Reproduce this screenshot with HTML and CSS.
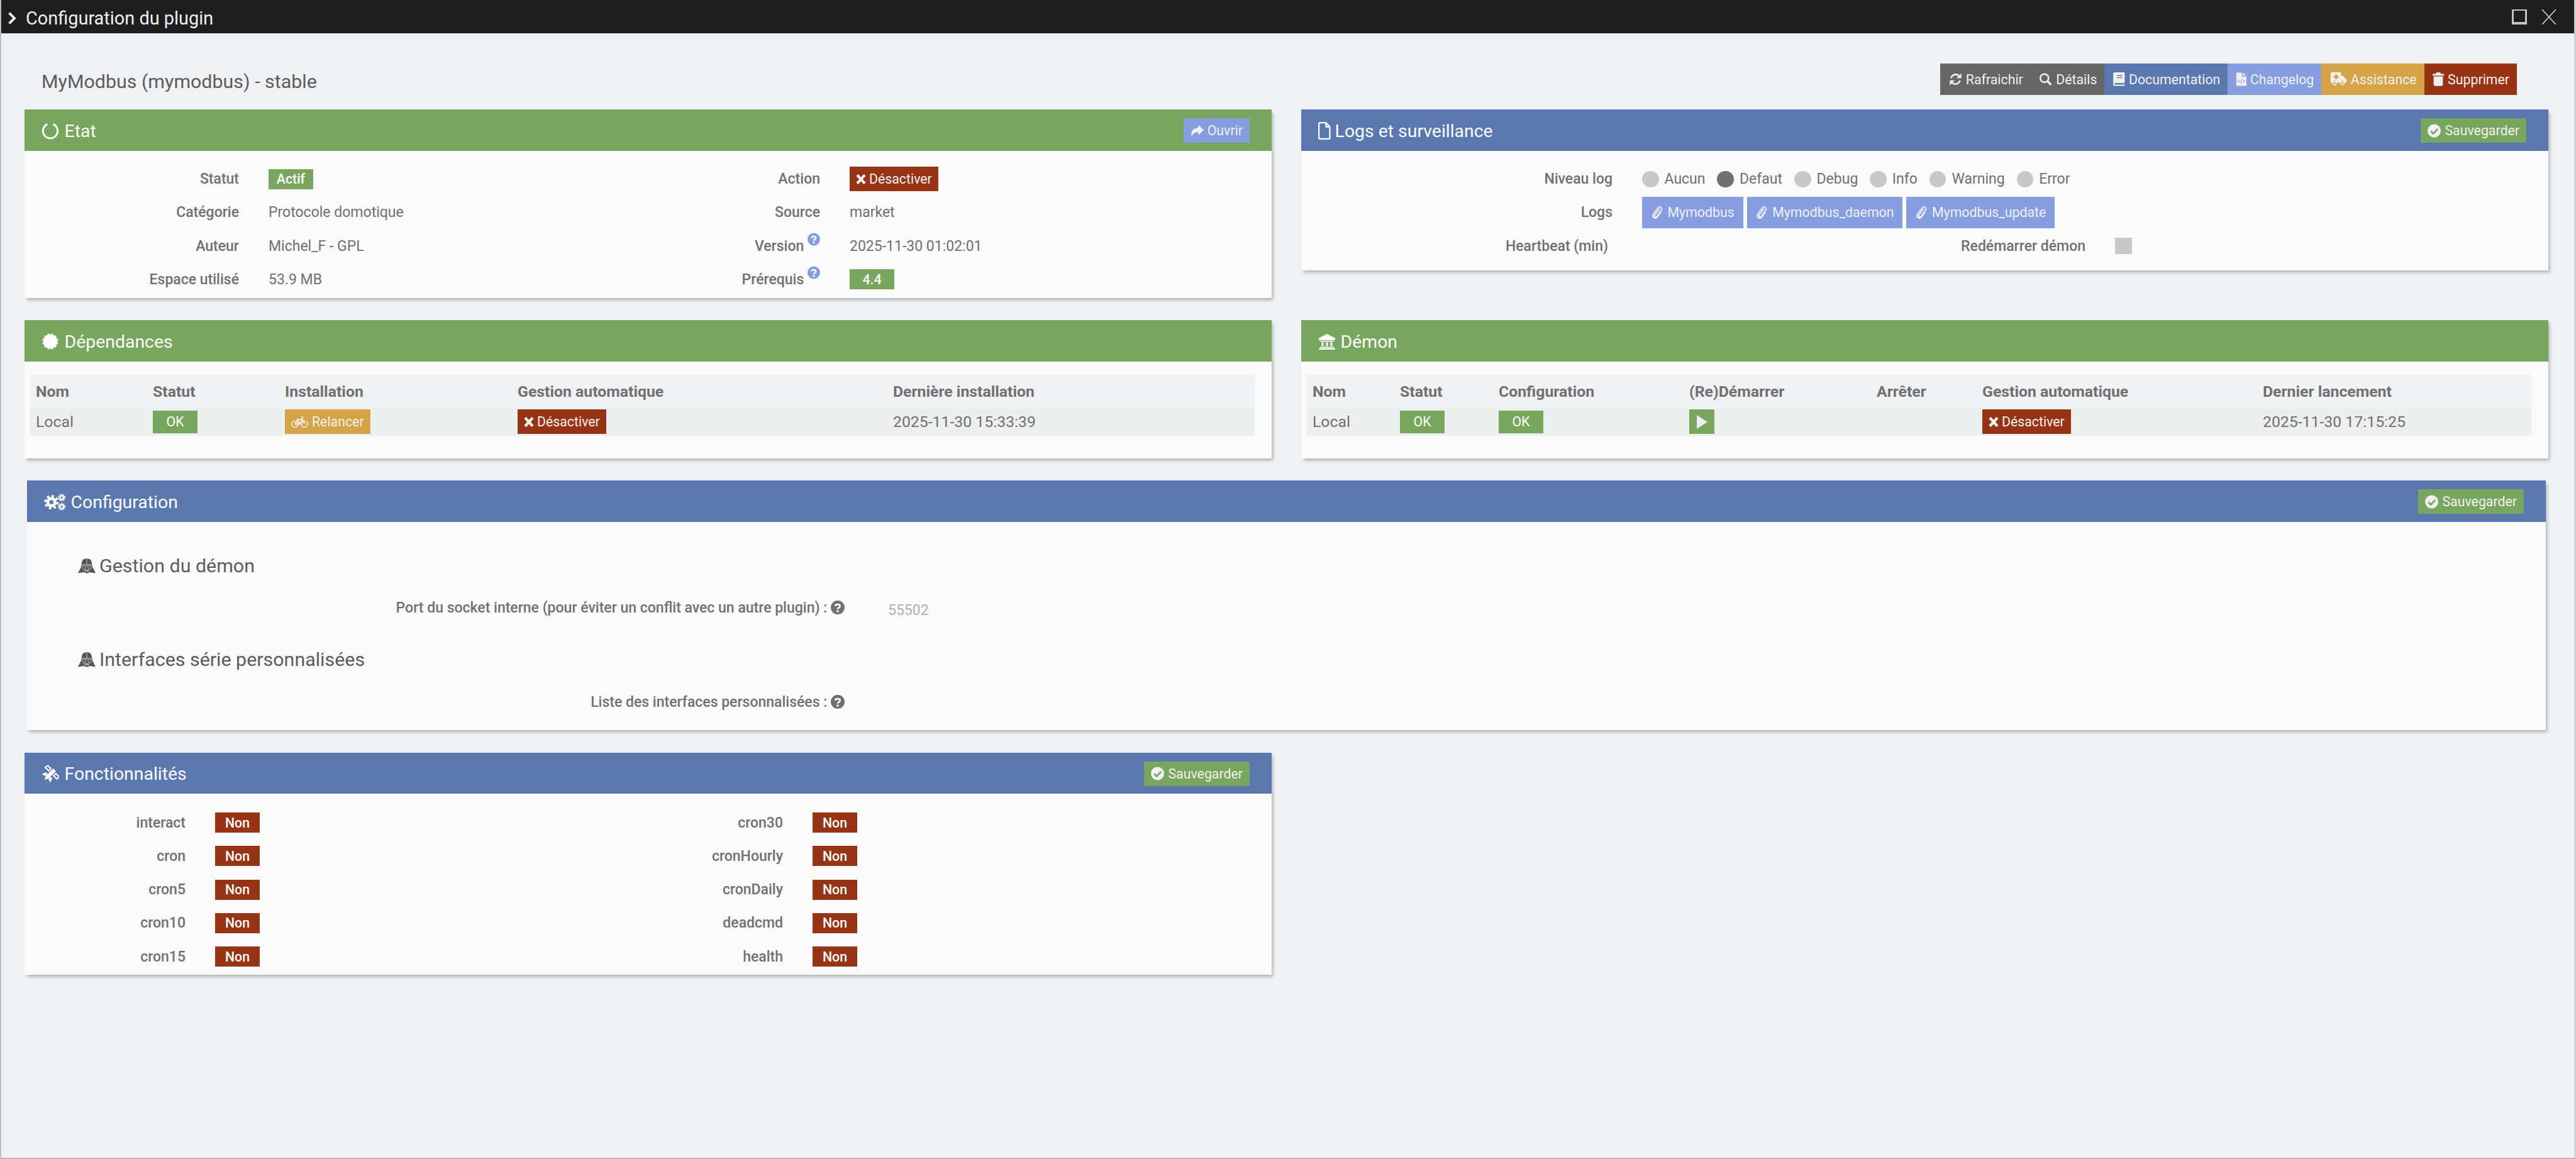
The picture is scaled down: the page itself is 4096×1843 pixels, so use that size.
FILE: index.html
```html
<!DOCTYPE html>
<html lang="fr">

<head>
    <meta name="viewport" content="width=device-width, initial-scale=1.0">
    <title>Configuration du plugin</title>
    <link rel="stylesheet" href="styles.css">
</head>

<body>
    <!-- icons, used below with <use> -->
    <svg class="sprite" xmlns="http://www.w3.org/2000/svg">
        <symbol id="i-notch" viewBox="0 0 24 24"><path d="M8 3A10 10 0 1 0 16 3" fill="none" stroke="currentColor" stroke-width="2.600"/></symbol>
        <symbol id="i-file" viewBox="0 0 20 28"><path d="M2 1.200h10.500l6 6.500V26a.8.8 0 0 1-.8.8H2a.8.8 0 0 1-.8-.8V2a.8.8 0 0 1 .8-.8zM12.500 1.500v6.200h6" fill="none" stroke="currentColor" stroke-width="2.200"/></symbol>
        <symbol id="i-cert" viewBox="0 0 24 24"><g fill="currentColor"><rect x="3.900" y="3.900" width="16.200" height="16.200"/><rect x="3.900" y="3.900" width="16.200" height="16.200" transform="rotate(30 12 12)"/><rect x="3.900" y="3.900" width="16.200" height="16.200" transform="rotate(60 12 12)"/></g></symbol>
        <symbol id="i-bank" viewBox="0 0 28 25"><path fill="currentColor" d="M14 0 27 6.500V10H1V6.500zM3 11h22v1.500H3zM5.500 13.500h3v6h-3zM12.500 13.500h3v6h-3zM19.500 13.500h3v6h-3zM3 20.500h22V22H3zM1 22.500h26V25H1z"/></symbol>
        <symbol id="i-cogs" viewBox="0 0 36 28"><g fill="none" stroke="currentColor"><circle cx="12" cy="14" r="6" stroke-width="5"/><circle cx="12" cy="14" r="10" stroke-width="4" stroke-dasharray="4 3.850"/><circle cx="29" cy="6.500" r="3" stroke-width="2.400"/><circle cx="29" cy="6.500" r="5.200" stroke-width="2" stroke-dasharray="2 1.270"/><circle cx="29" cy="21.500" r="3" stroke-width="2.400"/><circle cx="29" cy="21.500" r="5.200" stroke-width="2" stroke-dasharray="2 1.270"/></g></symbol>
        <symbol id="i-sat" viewBox="0 0 32 32"><g fill="currentColor" transform="rotate(45 16 16)"><path d="M12.500 5h7v19l-3.500 7-3.500-7z"/><path fill-rule="evenodd" d="M0 7h11v8H0zM2.500 9.500v3h6v-3zM21 7h11v8H21zM23.500 9.500v3h6v-3z"/><path d="M8 19h4v6l-7 2zM20 19h4l3 8-7-2z"/></g></symbol>
        <symbol id="i-vader" viewBox="0 0 32 27"><path fill="currentColor" d="M16 0C10 0 7.500 3 6.800 8L5.800 15 0 26.500 10 25l6 2 6-2 10 1.500L26.200 15l-1-7C24.500 3 22 0 16 0z"/><path fill="none" stroke="#e4e4e4" stroke-width=".9" d="M16 0v13M7 11h7.500l1.500 2 1.500-2H25M8 14c1-2 5-2 6 0l-1 5-3 1-2-3zM24 14c-1-2-5-2-6 0l1 5 3 1 2-3zM12 24l1-3h6l1 3M14 24v-3M16 24v-3M18 24v-3"/></symbol>
        <symbol id="i-refresh" viewBox="0 0 24 24"><g fill="currentColor"><path d="M4 10a8.500 8.500 0 0 1 14-4.500" fill="none" stroke="currentColor" stroke-width="3"/><path d="M22.500 1v9h-9z"/><path d="M20 14a8.500 8.500 0 0 1-14 4.500" fill="none" stroke="currentColor" stroke-width="3"/><path d="M1.500 23v-9h9z"/></g></symbol>
        <symbol id="i-search" viewBox="0 0 24 24"><circle cx="10" cy="10" r="7.500" fill="none" stroke="currentColor" stroke-width="3"/><path d="M15 15l7 7" stroke="currentColor" stroke-width="4"/></symbol>
        <symbol id="i-book" viewBox="0 0 22 26"><path fill="currentColor" d="M3 0h17a1.500 1.500 0 0 1 1.500 1.500V20H4a1.500 1.500 0 0 0 0 3h17.500v2.500H3a3 3 0 0 1-3-3V3a3 3 0 0 1 3-3z"/><path stroke="#5b78ae" stroke-width="1.800" d="M7 6h10M7 10h10"/></symbol>
        <symbol id="i-code" viewBox="0 0 20 26"><path fill="currentColor" d="M0 0h11v8h9v18H0zM13 0l7 6h-7z"/><path fill="none" stroke="#869ddf" stroke-width="1.300" d="M6.500 14l-3 3 3 3M13.500 14l3 3-3 3M11.200 12.500l-2.400 9"/></symbol>
        <symbol id="i-amb" viewBox="0 0 32 28"><path fill="currentColor" fill-rule="evenodd" d="M2 0h17a2 2 0 0 1 2 2v5h4l7 8v6h-4a4 4 0 0 0-8 0H12a4 4 0 0 0-8 0H0V2a2 2 0 0 1 2-2zM9 4v3H6v4h3v3h4v-3h3V7h-3V4z"/><circle cx="8" cy="22" r="3.300" fill="none" stroke="currentColor" stroke-width="2"/><circle cx="24" cy="22" r="3.300" fill="none" stroke="currentColor" stroke-width="2"/></symbol>
        <symbol id="i-trash" viewBox="0 0 22 26"><path fill="currentColor" d="M7 0h8l1 2.500h6v3.500H0V2.500h6zM2 7.500h18V23a3 3 0 0 1-3 3H5a3 3 0 0 1-3-3z"/></symbol>
        <symbol id="i-check" viewBox="0 0 24 24"><circle cx="12" cy="12" r="12" fill="currentColor"/><path d="M6 12.500l4.500 4.500 8-8.500" fill="none" stroke="#79a65e" stroke-width="3.200"/></symbol>
        <symbol id="i-share" viewBox="0 0 24 24"><path fill="currentColor" d="M14 1l10 9.500L14 20v-5.500C7 14.500 3.500 17 2.500 23.500-.5 14 4 7 14 6.500z"/></symbol>
        <symbol id="i-clip" viewBox="0 0 22 28"><path fill="none" stroke="currentColor" stroke-width="2.400" d="M15 6 5.500 19c-2 3 2 6 4.500 3L18.500 9.500c3.500-5-3-9.500-6.500-5L3 17c-4 6 3.500 12 8 6l7-10"/></symbol>
        <symbol id="i-times" viewBox="0 0 24 24"><path d="M3 2l18 20M21 2 3 22" stroke="currentColor" stroke-width="6.500"/></symbol>
        <symbol id="i-bike" viewBox="0 0 32 24"><g fill="none" stroke="currentColor" stroke-width="2"><circle cx="7" cy="16" r="5.800"/><circle cx="25" cy="16" r="5.800"/><path d="M7 16l5-9h9l4 9M12 7l4 9h-9M16 16l5-9M19 3h3l-1 4"/></g></symbol>
        <symbol id="i-play" viewBox="0 0 18 22"><path fill="currentColor" d="M1 0l17 11L1 22z"/></symbol>
        <symbol id="i-help" viewBox="0 0 24 24"><circle cx="12" cy="12" r="12" fill="currentColor"/><path d="M8 9.500C8 6 16 5.500 16 9.500c0 3-4 2.500-4 5.500" fill="none" stroke="#fff" stroke-width="3"/><path d="M10.300 16.800h3.400v3.400h-3.400z" fill="#fff"/></symbol>
    </svg>

    <div class="window">
        <div class="topbar">
            <svg class="chevron" viewBox="0 0 12 18"><path d="M2 1.500 9.500 9 2 16.500" fill="none" stroke="currentColor" stroke-width="3.500"/></svg>
            <span class="topbar-title">Configuration du plugin</span>
            <span class="win-btn win-square"></span>
            <svg class="win-btn" viewBox="0 0 24 24"><path d="M1 0l22 24M23 0 1 24" stroke="currentColor" stroke-width="1.800"/></svg>
        </div>

        <div class="content">
            <div class="plugin-head">
                <span class="plugin-name">MyModbus (mymodbus) - stable</span>
                <div class="toolbar">
                    <a class="btn tool gray"><svg class="ic"><use href="#i-refresh"/></svg>Rafraichir</a>
                    <a class="btn tool gray"><svg class="ic"><use href="#i-search"/></svg>Détails</a>
                    <a class="btn tool blue"><svg class="ic ic-doc"><use href="#i-book"/></svg>Documentation</a>
                    <a class="btn tool sky"><svg class="ic ic-code"><use href="#i-code"/></svg>Changelog</a>
                    <a class="btn tool orange"><svg class="ic ic-wide"><use href="#i-amb"/></svg>Assistance</a>
                    <a class="btn tool red"><svg class="ic ic-trash"><use href="#i-trash"/></svg>Supprimer</a>
                </div>
            </div>

            <div class="panels">
                <section class="panel">
                    <header class="panel-head green">
                        <h3><svg class="hi"><use href="#i-notch"/></svg>Etat</h3>
                        <a class="btn head-btn sky"><svg class="ic"><use href="#i-share"/></svg>Ouvrir</a>
                    </header>
                    <div class="form etat-form">
                        <label>Statut</label>
                        <div><span class="tag green">Actif</span></div>
                        <label>Action</label>
                        <div><a class="btn act red"><svg class="ic-x"><use href="#i-times"/></svg>Désactiver</a></div>
                        <label>Catégorie</label>
                        <div>Protocole domotique</div>
                        <label>Source</label>
                        <div>market</div>
                        <label>Auteur</label>
                        <div>Michel_F - GPL</div>
                        <label>Version <svg class="sup"><use href="#i-help"/></svg></label>
                        <div>2025-11-30 01:02:01</div>
                        <label>Espace utilisé</label>
                        <div>53.9 MB</div>
                        <label>Prérequis <svg class="sup"><use href="#i-help"/></svg></label>
                        <div><span class="tag green">4.4</span></div>
                    </div>
                </section>

                <section class="panel">
                    <header class="panel-head blue">
                        <h3><svg class="hi hi-file"><use href="#i-file"/></svg>Logs et surveillance</h3>
                        <a class="btn head-btn green"><svg class="ic"><use href="#i-check"/></svg>Sauvegarder</a>
                    </header>
                    <div class="form logs-form">
                        <label>Niveau log</label>
                        <div class="radios">
                            <span class="radio">Aucun</span>
                            <span class="radio on">Defaut</span>
                            <span class="radio">Debug</span>
                            <span class="radio">Info</span>
                            <span class="radio">Warning</span>
                            <span class="radio">Error</span>
                        </div>
                        <label>Logs</label>
                        <div class="log-links">
                            <a class="btn log sky"><svg class="ic"><use href="#i-clip"/></svg>Mymodbus</a>
                            <a class="btn log sky"><svg class="ic"><use href="#i-clip"/></svg>Mymodbus_daemon</a>
                            <a class="btn log sky"><svg class="ic"><use href="#i-clip"/></svg>Mymodbus_update</a>
                        </div>
                        <label class="label-short">Heartbeat (min)</label>
                        <div class="restart">
                            <label>Redémarrer démon</label>
                            <span class="checkbox"></span>
                        </div>
                    </div>
                </section>

                <section class="panel">
                    <header class="panel-head green">
                        <h3><svg class="hi"><use href="#i-cert"/></svg>Dépendances</h3>
                    </header>
                    <div class="table-wrap">
                        <table class="deps">
                            <tr><th>Nom</th><th>Statut</th><th>Installation</th><th>Gestion automatique</th><th>Dernière installation</th></tr>
                            <tr>
                                <td>Local</td>
                                <td><span class="tag ok green">OK</span></td>
                                <td><a class="btn act orange"><svg class="ic ic-wide"><use href="#i-bike"/></svg>Relancer</a></td>
                                <td><a class="btn act red"><svg class="ic-x"><use href="#i-times"/></svg>Désactiver</a></td>
                                <td>2025-11-30 15:33:39</td>
                            </tr>
                        </table>
                    </div>
                </section>

                <section class="panel">
                    <header class="panel-head green">
                        <h3><svg class="hi hi-bank"><use href="#i-bank"/></svg>Démon</h3>
                    </header>
                    <div class="table-wrap">
                        <table class="daemon">
                            <tr><th>Nom</th><th>Statut</th><th>Configuration</th><th>(Re)Démarrer</th><th>Arrêter</th><th>Gestion automatique</th><th>Dernier lancement</th></tr>
                            <tr>
                                <td>Local</td>
                                <td><span class="tag ok green">OK</span></td>
                                <td><span class="tag ok green">OK</span></td>
                                <td><a class="btn act play green"><svg class="ic-play"><use href="#i-play"/></svg></a></td>
                                <td></td>
                                <td><a class="btn act red"><svg class="ic-x"><use href="#i-times"/></svg>Désactiver</a></td>
                                <td>2025-11-30 17:15:25</td>
                            </tr>
                        </table>
                    </div>
                </section>

                <section class="panel panel-config">
                    <header class="panel-head blue">
                        <h3><svg class="hi hi-cogs"><use href="#i-cogs"/></svg>Configuration</h3>
                        <a class="btn head-btn green"><svg class="ic"><use href="#i-check"/></svg>Sauvegarder</a>
                    </header>
                    <div class="config-body">
                        <h4 class="legend legend-first"><svg class="helmet"><use href="#i-vader"/></svg>Gestion du démon</h4>
                        <div class="config-row row-port">
                            <label>Port du socket interne (pour éviter un conflit avec un autre plugin) : <svg class="help"><use href="#i-help"/></svg></label>
                            <span class="placeholder">55502</span>
                        </div>
                        <h4 class="legend legend-second"><svg class="helmet"><use href="#i-vader"/></svg>Interfaces série personnalisées</h4>
                        <div class="config-row row-list">
                            <label>Liste des interfaces personnalisées : <svg class="help"><use href="#i-help"/></svg></label>
                        </div>
                    </div>
                </section>

                <section class="panel">
                    <header class="panel-head blue">
                        <h3><svg class="hi hi-sat"><use href="#i-sat"/></svg>Fonctionnalités</h3>
                        <a class="btn head-btn green"><svg class="ic"><use href="#i-check"/></svg>Sauvegarder</a>
                    </header>
                    <div class="form func-form">
                        <label>interact</label><div><span class="tag red">Non</span></div>
                        <label>cron30</label><div><span class="tag red">Non</span></div>
                        <label>cron</label><div><span class="tag red">Non</span></div>
                        <label>cronHourly</label><div><span class="tag red">Non</span></div>
                        <label>cron5</label><div><span class="tag red">Non</span></div>
                        <label>cronDaily</label><div><span class="tag red">Non</span></div>
                        <label>cron10</label><div><span class="tag red">Non</span></div>
                        <label>deadcmd</label><div><span class="tag red">Non</span></div>
                        <label>cron15</label><div><span class="tag red">Non</span></div>
                        <label>health</label><div><span class="tag red">Non</span></div>
                    </div>
                </section>
            </div>
        </div>
    </div>
</body>

</html>
```

FILE: styles.css
```css
* {
    box-sizing: border-box;
}

html,
body {
    margin: 0;
    height: 100%;
}

body {
    font-family: Roboto, "Liberation Sans", sans-serif;
    font-size: 23px;
    color: #707070;
    background: #f0f1f3;
    overflow: hidden;
}

.sprite {
    display: none;
}

.window {
    height: 100%;
    border-left: 2px solid #bcbcbc;
    border-right: 3px solid #cfcfcf;
    border-bottom: 2px solid #bcbcbc;
}

/* colours */
.green { background: #79a65e; }
.blue { background: #5b78ae; }
.sky { background: #869ddf; }
.orange { background: #d4a447; }
.red { background: #983416; }
.gray { background: #666; }

/* top bar */
.topbar {
    display: flex;
    align-items: center;
    height: 53px;
    padding-left: 10px;
    background: #1e1e1e;
    color: #f0f0f0;
}

.chevron {
    width: 14px;
    height: 20px;
    margin: 5px 15px 0 0;
}

.topbar-title {
    flex: 1;
    margin-top: 5px;
    font-size: 28.9px;
}

.win-btn {
    width: 24px;
    height: 24px;
    margin-right: 23px;
    color: #c4c4c4;
}

.win-square {
    border: 3px solid #c4c4c4;
    border-top-width: 2px;
    border-bottom-width: 4px;
}

.win-btn:last-child {
    margin-right: 28px;
}

/* page */
.content {
    padding: 0 41px 0 37px;
}

.plugin-head {
    display: flex;
    justify-content: space-between;
    align-items: center;
    height: 121px;
    padding: 48px 50px 23px 27px;
}

.plugin-name {
    margin-top: 7px;
    font-size: 30.4px;
    color: #5c5c5c;
}

.toolbar {
    display: flex;
}

.btn {
    display: inline-flex;
    align-items: center;
    color: #f0f0f0;
    font-size: 21.3px;
    white-space: nowrap;
}

.tool {
    height: 50px;
    padding: 0 12px 0 13.5px;
}

.ic {
    width: 21px;
    height: 22px;
    margin-right: 6px;
    flex: none;
}

.ic-wide {
    width: 27px;
}

.ic-doc {
    width: 19px;
}

.ic-code {
    width: 16px;
}

.ic-trash {
    width: 18px;
}

.ic-x {
    width: 16px;
    height: 16px;
    margin-right: 5px;
    flex: none;
}

.panels {
    display: grid;
    grid-template-columns: 1983px 1983px;
    column-gap: 47px;
    row-gap: 35.5px;
    align-items: start;
}

.panel {
    background: #fafafa;
    box-shadow: 3px 4px 5px -1px rgba(0, 0, 0, 0.28);
}

.panel-config {
    grid-column: 1 / -1;
    margin: 0 4px;
}

.panel-head {
    display: flex;
    justify-content: space-between;
    align-items: center;
    height: 65.6px;
    padding: 1.6px 35px 0 26.6px;
    color: #fff;
}

.panel-head h3 {
    display: flex;
    align-items: center;
    margin: 0;
    padding-top: 1px;
    font-size: 28.4px;
    font-weight: 400;
}

.hi {
    width: 28px;
    height: 28px;
    margin-right: 9px;
}

.hi-file {
    width: 20px;
    margin-right: 7px;
}

.hi-bank {
    height: 25px;
    margin-right: 8px;
}

.hi-cogs {
    width: 35px;
    height: 27px;
    margin-right: 8px;
}

.head-btn {
    height: 39px;
    padding: 0 11px;
}

/* label / value rows */
.form {
    display: grid;
    grid-auto-rows: 53.2px;
    align-items: center;
    column-gap: 47px;
    padding-top: 18.6px;
}

.form label,
.config-row label {
    font-weight: 500;
    text-align: right;
    white-space: nowrap;
}

.etat-form {
    grid-template-columns: 341px 400px 430px 1fr;
    padding-bottom: 2.7px;
}

.logs-form {
    grid-template-columns: 495px 1fr;
    padding-bottom: 12.4px;
}

.label-short {
    padding-right: 7px;
}

.func-form {
    grid-template-columns: 256px 400px 456px 1fr;
    padding-top: 19.4px;
    padding-bottom: 2px;
}

.tag {
    display: inline-flex;
    justify-content: center;
    align-items: center;
    width: 71px;
    height: 32px;
    color: #fff;
    font-size: 21.3px;
    font-weight: 500;
}

.tag.ok {
    height: 35.5px;
    font-weight: 400;
}

.act {
    height: 39px;
    padding: 0 10px;
}

.sup {
    width: 20px;
    height: 21px;
    margin-top: -16px;
    vertical-align: 8px;
    color: #869ddf;
}

.radios {
    display: flex;
    align-items: center;
}

.radio {
    display: flex;
    align-items: center;
    margin-right: 19px;
}

.radio::before {
    content: "";
    width: 26.5px;
    height: 26.5px;
    margin-right: 9px;
    border-radius: 50%;
    background: #c8c8c8;
}

.radio.on::before {
    background: #707070;
}

.log-links {
    display: flex;
    gap: 6px;
}

.log {
    height: 50px;
    padding: 0 14px 0 13.5px;
}

.restart {
    display: grid;
    grid-template-columns: 705px 1fr;
    column-gap: 47px;
    align-items: center;
}

.checkbox {
    width: 26.5px;
    height: 26.5px;
    background: #c8c8c8;
}

/* tables */
.table-wrap {
    padding: 21px 27px 35.5px 9px;
}

table {
    width: 100%;
    table-layout: fixed;
    border-collapse: collapse;
    background: #f0f1f3;
    font-size: 24.8px;
}

th,
td {
    padding: 0 9px;
    text-align: left;
    vertical-align: middle;
}

th {
    height: 53px;
    font-weight: 700;
}

td {
    height: 44.4px;
    background: #edefee;
}

.deps th:nth-child(1) { width: 186px; }
.deps th:nth-child(2) { width: 210px; }
.deps th:nth-child(3) { width: 370px; }
.deps th:nth-child(4) { width: 597px; }

.daemon th:nth-child(1) { width: 139px; }
.daemon th:nth-child(2) { width: 157px; }
.daemon th:nth-child(3) { width: 303px; }
.daemon th:nth-child(4) { width: 298px; }
.daemon th:nth-child(5) { width: 168px; }
.daemon th:nth-child(6) { width: 446px; }

.play {
    justify-content: center;
    width: 40px;
    padding: 0;
}

.ic-play {
    width: 18px;
    height: 22px;
}

/* configuration form */
.config-body {
    padding: 0 0 25px;
}

.legend {
    display: flex;
    align-items: center;
    height: 40px;
    margin: 0 0 0 81px;
    font-size: 30.4px;
    font-weight: 400;
    color: #5c5c5c;
}

.legend-first {
    margin-top: 50px;
}

.legend-second {
    margin-top: 42.4px;
}

.helmet {
    width: 28px;
    height: 24px;
    margin-right: 6px;
    color: #555;
}

.config-row {
    display: flex;
    align-items: center;
    height: 40px;
}

.row-port {
    margin-top: 26.6px;
}

.row-list {
    margin-top: 27.5px;
}

.config-row label {
    width: 1300px;
}

.help {
    width: 22px;
    height: 22px;
    vertical-align: -3px;
    color: #707070;
}

.placeholder {
    margin: 8px 0 0 69px;
    color: #b0b0b0;
}
```
